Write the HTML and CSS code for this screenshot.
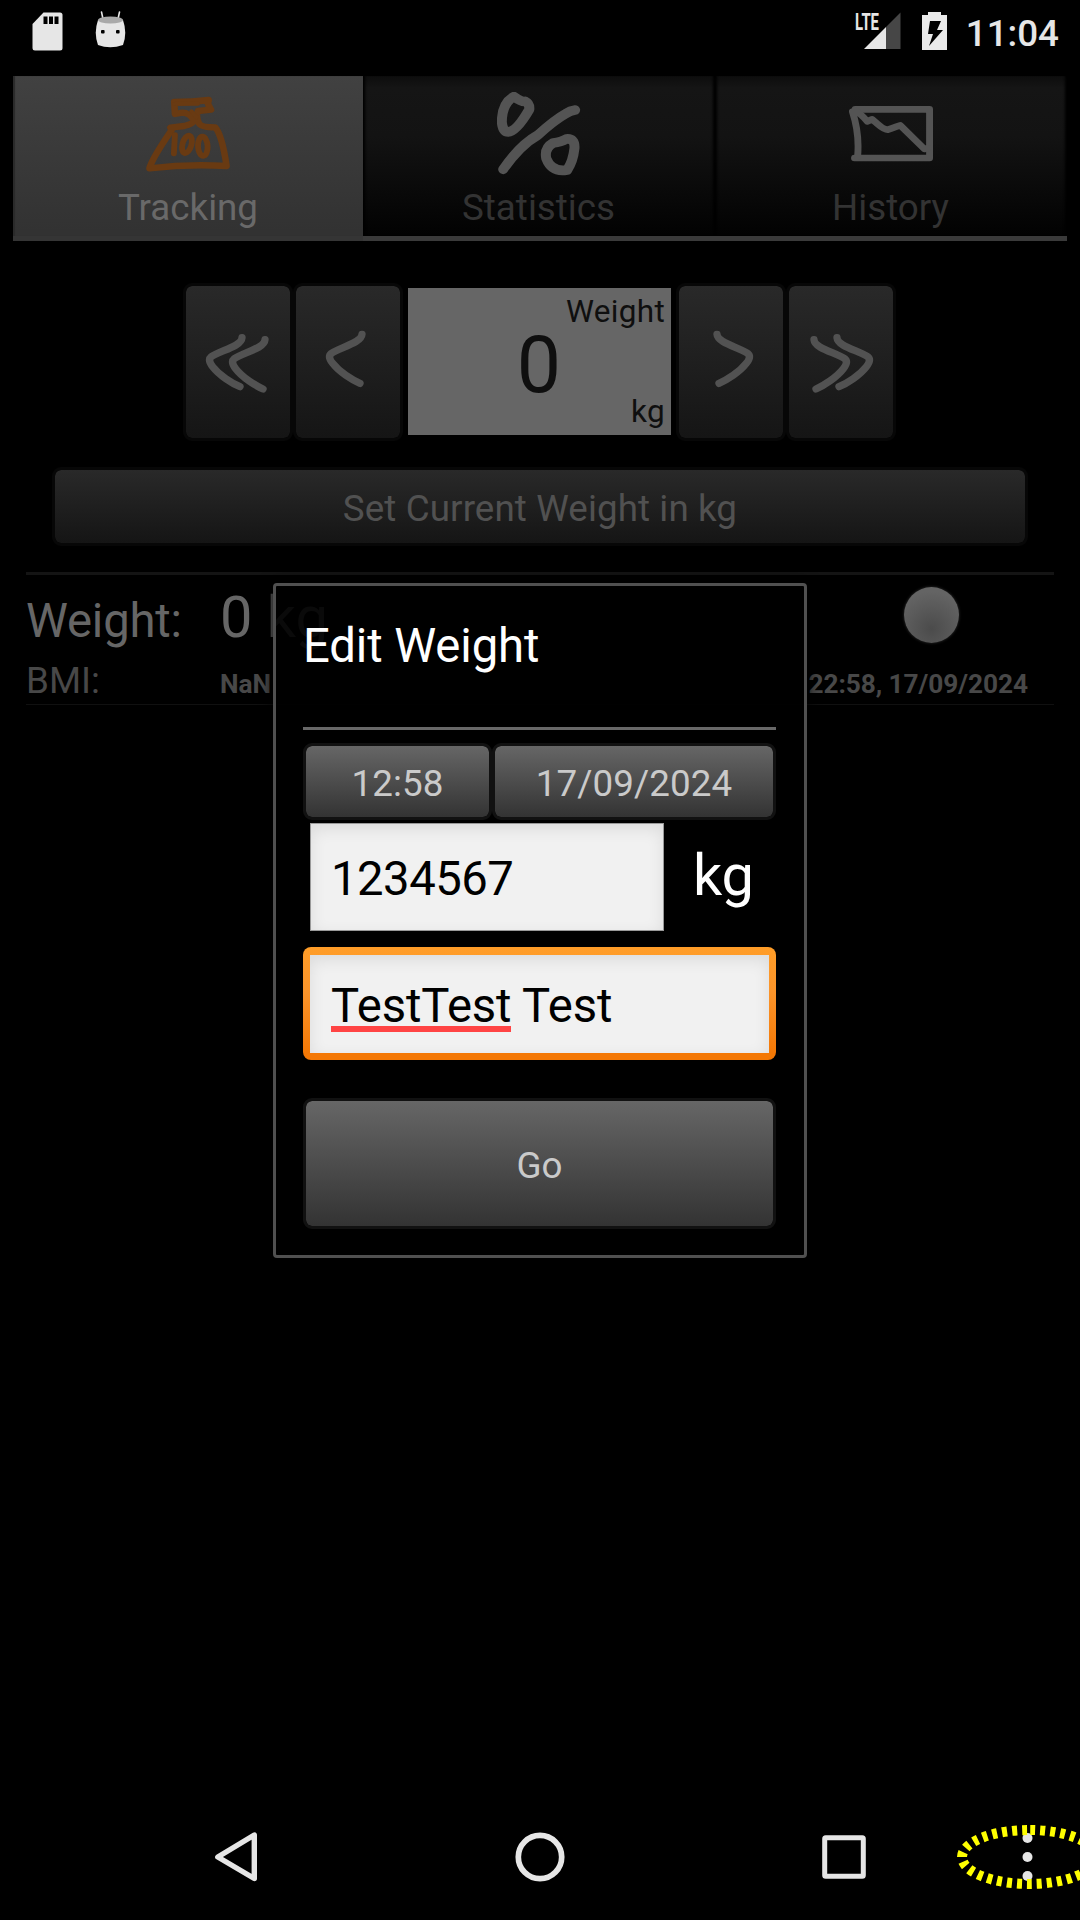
FILE: index.html
```html
<!DOCTYPE html>
<html lang="en">
<head>
<meta charset="utf-8">
<title>Edit Weight</title>
<link rel="stylesheet" href="styles.css">
</head>
<body>
<div class="screen">
  <header class="status">
    <div class="status-left">
      <svg class="sd" width="31" height="39" viewBox="0 0 31 39"><path fill="#e6e6e6" d="M11.5 .5H28Q30.500 .5 30.500 3V36Q30.500 38.500 28 38.500H3Q.5 38.500 .5 36V12Z"/><path d="M11.500 4.500h4v7.500h-4zM17 4.500h4v7.500h-4zM22.500 4.500h4v7.500h-4z"/></svg>
      <svg class="droid" width="31" height="38" viewBox="0 0 31 38"><path d="M6.500 1L8 8M24.500 1L23 8" stroke="#e6e6e6" stroke-width="1.600" stroke-linecap="round"/><path fill="#e6e6e6" d="M3 9Q-1.500 22 3 34Q15 38.500 28 34Q32.500 22 28 9Z"/><ellipse cx="15.500" cy="9" rx="12.500" ry="3.500" fill="#a9a9a9"/><rect x="6" y="19" width="3.600" height="3.600" rx="1"/><rect x="21" y="19" width="3.600" height="3.600" rx="1"/></svg>
    </div>
    <div class="status-right">
      <svg class="signal" width="46" height="38" viewBox="0 0 46 38"><path fill="#e6e6e6" d="M9 37L31 15V37Z"/><path fill="#464646" d="M31 15L45.500 .5V37H31Z"/><text class="lte" x="0" y="17.500" textLength="24" lengthAdjust="spacingAndGlyphs">LTE</text></svg>
      <svg class="battery" width="25" height="38" viewBox="0 0 25 38"><path fill="#eaeaea" d="M6 0H19V3H25V38H0V3H6Z"/><path d="M8 9H19L15 18H21L7 34L11 22H6Z"/></svg>
      <span class="clock">11:04</span>
    </div>
  </header>

  <nav class="tabs">
    <div class="tab selected">
      <svg class="tab-icon" viewBox="424 276 244 252" preserveAspectRatio="none"><g fill="none" stroke="#693a12" stroke-linecap="round" stroke-linejoin="round"><path stroke-width="19" d="M434 505Q442 475 500 388L495 383L535 378Q560 372 564 362Q550 338 530 338L508 342L506 306Q560 306 606 300L604 312L613 329L575 333Q568 350 578 370Q584 382 625 382Q645 405 658 498Q545 491 434 505Z"/><path stroke-width="12" d="M507 312L575 311M556 334L571 352"/><path stroke-width="17" d="M508 405L505 460"/><ellipse cx="543" cy="433" rx="13" ry="27" stroke-width="17" transform="rotate(15 543 433)"/><ellipse cx="589" cy="439" rx="14" ry="29" stroke-width="17" transform="rotate(-3 589 439)"/></g></svg>
      <span>Tracking</span>
    </div>
    <div class="tab">
      <svg class="tab-icon" viewBox="1443 276 244 252" preserveAspectRatio="none"><g fill="none" stroke="#545454" stroke-width="29" stroke-linecap="round" stroke-linejoin="round"><path d="M1492 290Q1457 310 1457 367Q1460 396 1475 396Q1500 394 1537 328Q1538 310 1525 304Q1515 307 1492 290Z"/><path d="M1461 508Q1510 435 1562 405Q1610 360 1643 341Q1655 332 1670 330"/><path d="M1644 417Q1670 414 1668 445Q1664 484 1647 510Q1602 518 1586 475Q1580 444 1606 429Q1630 426 1644 417Z"/></g></svg>
      <span>Statistics</span>
    </div>
    <div class="tab">
      <svg class="tab-icon" viewBox="897 276 244 252" preserveAspectRatio="none"><g fill="none" stroke="#545454" stroke-width="20" stroke-linecap="round" stroke-linejoin="round"><path d="M915 328H1131V474H913"/><path d="M907 335Q928 400 922 470M915 332Q930 340 950 364L964 358L980 372Q1000 390 1010 389Q1022 384 1046 376L1116 447L1126 445"/></g></svg>
      <span>History</span>
    </div>
  </nav>

  <section class="picker">
    <div class="btn dim step"><svg width="104" height="152" viewBox="0 0 312 456"><path d="M168 155C166 182 100 194 76 212Q64 222 80 242C100 268 138 292 162 302M237 161C235 188 169 200 145 218Q133 228 149 248C169 274 207 298 231 309"/></svg></div>
    <div class="btn dim step"><svg width="104" height="152" viewBox="0 0 312 456"><path d="M198 145C196 172 130 184 106 202Q94 212 110 232C130 258 168 282 192 292"/></svg></div>
    <div class="display">
      <span class="label">Weight</span>
      <span class="value">0</span>
      <span class="unit">kg</span>
    </div>
    <div class="btn dim step"><svg class="flip" width="104" height="152" viewBox="0 0 312 456"><path d="M198 145C196 172 130 184 106 202Q94 212 110 232C130 258 168 282 192 292"/></svg></div>
    <div class="btn dim step"><svg class="flip" width="104" height="152" viewBox="0 0 312 456"><path d="M168 155C166 182 100 194 76 212Q64 222 80 242C100 268 138 292 162 302M237 161C235 188 169 200 145 218Q133 228 149 248C169 274 207 298 231 309"/></svg></div>
  </section>

  <div class="btn dim set">Set Current Weight in kg</div>

  <section class="entry">
    <div class="entry-row top"><span class="name">Weight:</span><span class="amount">0 kg</span><span class="ball"></span></div>
    <div class="entry-row bottom"><span class="name">BMI:</span><b>NaN</b><b class="when">22:58, 17/09/2024</b></div>
  </section>

  <div class="dialog">
    <h1>Edit Weight</h1>
    <div class="row">
      <div class="btn time">12:58</div>
      <div class="btn date">17/09/2024</div>
    </div>
    <div class="row weight-row">
      <div class="field number">1234567</div>
      <span class="kg">kg</span>
    </div>
    <div class="focus"><div class="field"><span class="typo">TestTest</span> Test</div></div>
    <div class="btn go">Go</div>
  </div>

  <footer class="navbar">
    <svg width="1080" height="126" viewBox="0 1794 1080 126">
      <g fill="none" stroke="#e6e6e6" stroke-linejoin="round">
        <path stroke-width="5.400" d="M254.300 1835V1878.500L217.800 1857Z"/>
        <circle cx="540" cy="1857" r="21.700" stroke-width="5.700"/>
        <rect x="824.700" y="1837.700" width="38.600" height="38.600" rx="1" stroke-width="5"/>
      </g>
      <g fill="#e6e6e6"><circle cx="1027.500" cy="1838" r="5"/><circle cx="1027.500" cy="1857" r="5"/><circle cx="1027.500" cy="1876" r="5"/></g>
      <path d="M1029 1830A67 27 0 0 0 1029 1884A67 27 0 0 0 1029 1830" fill="none" stroke="#ff0" stroke-width="10" stroke-dasharray="5 5" stroke-dashoffset="-2"/>
    </svg>
  </footer>
</div>
</body>
</html>
```
FILE: styles.css
```css
* { box-sizing: border-box; }
body { margin: 0; background: #000; }
svg { display: block; flex: none; }

.screen {
  position: relative;
  width: 1080px;
  height: 1920px;
  overflow: hidden;
  display: flex;
  flex-direction: column;
  background: #000;
  font-family: Roboto, sans-serif;
  font-size: 36.75px;
  white-space: nowrap;
}

/* status bar */
.status { height: 76px; display: flex; justify-content: space-between; padding: 11px 21px 0 32px; }
.status-left, .status-right { display: flex; align-items: flex-start; }
.sd { margin-top: 1px; }
.droid { margin-left: 32px; }
.signal { margin-top: 1px; overflow: visible; }
.battery { margin: 1px 19px 0 21px; }
.lte { font: 700 23px Roboto, sans-serif; fill: #e6e6e6; }
.clock { color: #e6e6e6; font-weight: 500; line-height: 45px; }

/* tabs */
.tabs { display: grid; grid-template-columns: 350px 352px 352px; margin: 0 13px; height: 165px; }
.tab {
  display: flex;
  flex-direction: column;
  align-items: center;
  padding: 16px 1px 0 0;
  color: #333;
  background: linear-gradient(#0d0d0d, #151515 12px, #131313 60px, #020202 158px);
  border-bottom: 5px solid #3a3a3a;
  box-shadow: inset 4px 0 3px -2px #000, inset -4px 0 3px -2px #000;
}
.tab span { line-height: 43px; margin-top: 10px; }
.tab.selected { padding-right: 0; background: linear-gradient(#414141, #323232 155px); border-bottom-color: #353535; color: #696969; box-shadow: inset 2px 0 1px #2a2a2a; }
.tab-icon { width: 84px; height: 84px; }
.tab.selected .tab-icon { margin-right: 1px; }

/* shared buttons */
.btn {
  display: flex;
  align-items: center;
  justify-content: center;
  border: 3px solid #111;
  border-radius: 9px;
  background: linear-gradient(#666, #333) padding-box;
  color: #cacaca;
  letter-spacing: .1px;
}
.btn.dim { border-color: #070707; background: linear-gradient(#292929, #151515) padding-box; color: #515151; }

/* picker */
.picker { display: flex; justify-content: flex-start; align-items: flex-start; margin: 42px 0 0 183px; }
.step { width: 110px; height: 158px; }
.step path { fill: none; stroke: #525252; stroke-width: 22; stroke-linecap: round; }
.flip { transform: scaleX(-1); }
.display {
  width: 263px;
  height: 147px;
  margin: 5px 5px 0;
  padding: 5px 6px 0 0;
  display: grid;
  grid-template-rows: 38px 60px 40px;
  background: #666;
  color: #0f0f0f;
  font-size: 31.5px;
}
.display span { text-align: right; line-height: 38px; letter-spacing: .3px; }
.display .value { font-size: 78.75px; line-height: 69px; text-align: center; padding-left: 5px; }
.display .unit { line-height: 42px; }

.set { width: 976px; height: 79px; margin: 26px 0 0 52px; padding-top: 3px; }

/* latest entry */
.entry { margin: 26px 26px 0; border-top: 3px solid #141414; border-bottom: 1px solid #101010; height: 133px; }
.entry-row { display: grid; grid-template-columns: 194px 1fr auto; align-items: baseline; color: #666; }
.entry-row.top { height: 74px; grid-template-columns: 194px 1fr 150px; font-size: 47.25px; line-height: 90px; }
.top .name { letter-spacing: -.2px; }
.amount { font-size: 57.75px; line-height: 84px; }
.ball {
  align-self: start;
  width: 55px;
  height: 56px;
  margin-top: 12px;
  border-radius: 50%;
  background: radial-gradient(circle at 50% 75%, #4b4b4b, #646464 75%);
  box-shadow: 0 0 3px #333;
}
.entry-row.bottom { color: #484848; line-height: 64px; }
.entry-row b { font-size: 26.25px; }
.when { padding-right: 26px; letter-spacing: -.06px; }

/* dialog over the page */
.dialog {
  position: absolute;
  left: 273px;
  top: 583px;
  width: 534px;
  height: 675px;
  padding: 0 28px 0 27px;
  border: 3px solid #505050;
  border-radius: 4px;
  background: rgba(0, 0, 0, .9);
  box-shadow: 0 0 14px #000;
}
.dialog h1 { margin: 0; height: 144px; border-bottom: 3px solid #686868; color: #fff; font-size: 47.25px; font-weight: 400; line-height: 121px; letter-spacing: -.1px; }
.row { display: flex; }
.dialog h1 + .row { margin-top: 13px; }
.time { width: 189px; height: 77px; padding-top: 3px; }
.date { width: 284px; height: 77px; padding-top: 3px; }
.weight-row { padding: 3px 0 0 7px; height: 127px; }
.weight-row .field { width: 354px; height: 108px; border: 1px solid #999; padding-left: 20px; line-height: 111px; }
.field {
  background: #f1f1f1;
  color: #000;
  font-size: 47.25px;
  letter-spacing: -.15px;
  padding-left: 21px;
  box-shadow: inset 0 5px 16px rgba(0, 0, 0, .09);
}
.field.number { letter-spacing: -.5px; }
.kg { color: #fff; font-size: 57.75px; line-height: 105px; margin-left: 29px; letter-spacing: -.3px; }
.focus { height: 113px; padding: 8px 7px 7px; border-radius: 8px; background: linear-gradient(#ff9d28, #fb942a 40%, #f47805 94%); }
.focus .field { height: 98px; line-height: 102px; }
.typo { display: inline-block; height: 77px; line-height: 102px; vertical-align: top; border-bottom: 6px solid #f44; }
.go { height: 131px; margin-top: 38px; padding-top: 3px; }

/* system navigation */
.navbar { margin-top: auto; height: 126px; }
```
